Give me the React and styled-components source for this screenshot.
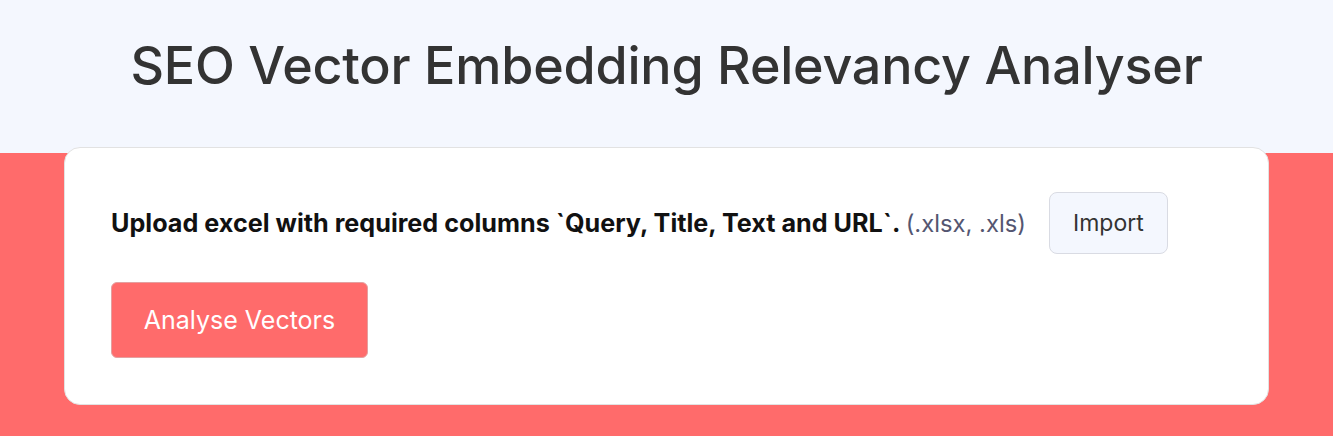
import React from 'react';
import styled, {createGlobalStyle} from 'styled-components';

const GlobalStyle = createGlobalStyle`
    html, body {
        margin: 0;
        padding: 0;
        background: #ff6b6b;
        font-family: "Inter", "Open Sans", sans-serif;
    }
`;

const Page = styled.div`
    min-height: 436px;
    background: #ff6b6b;
`;

const Header = styled.header`
    background: #f4f7fe;
    height: 153px;
    display: flex;
    justify-content: center;
    padding-top: 35px;
    box-sizing: border-box;
`;

const Title = styled.h1`
    margin: 0;
    font-size: 52px;
    font-weight: 500;
    color: #333333;
    letter-spacing: -0.2px;
    line-height: 1.2;
`;

const Card = styled.section`
    width: 1205px;
    margin: -6px auto 0;
    background: #ffffff;
    border: 1px solid #e2e2e2;
    border-radius: 16px;
    box-sizing: border-box;
    padding: 44px 47px 46px 46px;
    display: flex;
    flex-direction: column;
    align-items: flex-start;
    gap: 28px;
`;

const UploadRow = styled.div`
    display: flex;
    align-items: center;
    gap: 23px;
`;

const Label = styled.p`
    margin: 0;
    font-size: 25.2px;
    font-weight: 700;
    color: #111111;
`;

const Hint = styled.span`
    font-size: 23.8px;
    font-weight: 400;
    color: #545671;
`;

const Button = styled.button`
    font-family: inherit;
    cursor: pointer;
    border-radius: ${p => p.$primary ? '6px' : '8px'};
    border: 1px solid ${p => p.$primary ? '#e4a0a0' : '#d9dbe3'};
    background: ${p => p.$primary ? '#ff6b6b' : '#f4f7fe'};
    color: ${p => p.$primary ? '#ffffff' : '#333333'};
    font-size: ${p => p.$primary ? '25px' : '23px'};
    width: ${p => p.$primary ? '257px' : '119px'};
    height: ${p => p.$primary ? '76px' : '62px'};
`;

export default function App() {
    return (
        <Page>
            <GlobalStyle/>
            <Header>
                <Title>SEO Vector Embedding Relevancy Analyser</Title>
            </Header>
            <Card>
                <UploadRow>
                    <Label>
                        Upload excel with required columns `Query, Title, Text and URL`. <Hint>(.xlsx, .xls)</Hint>
                    </Label>
                    <Button>Import</Button>
                </UploadRow>
                <Button $primary>Analyse Vectors</Button>
            </Card>
        </Page>
    );
}
